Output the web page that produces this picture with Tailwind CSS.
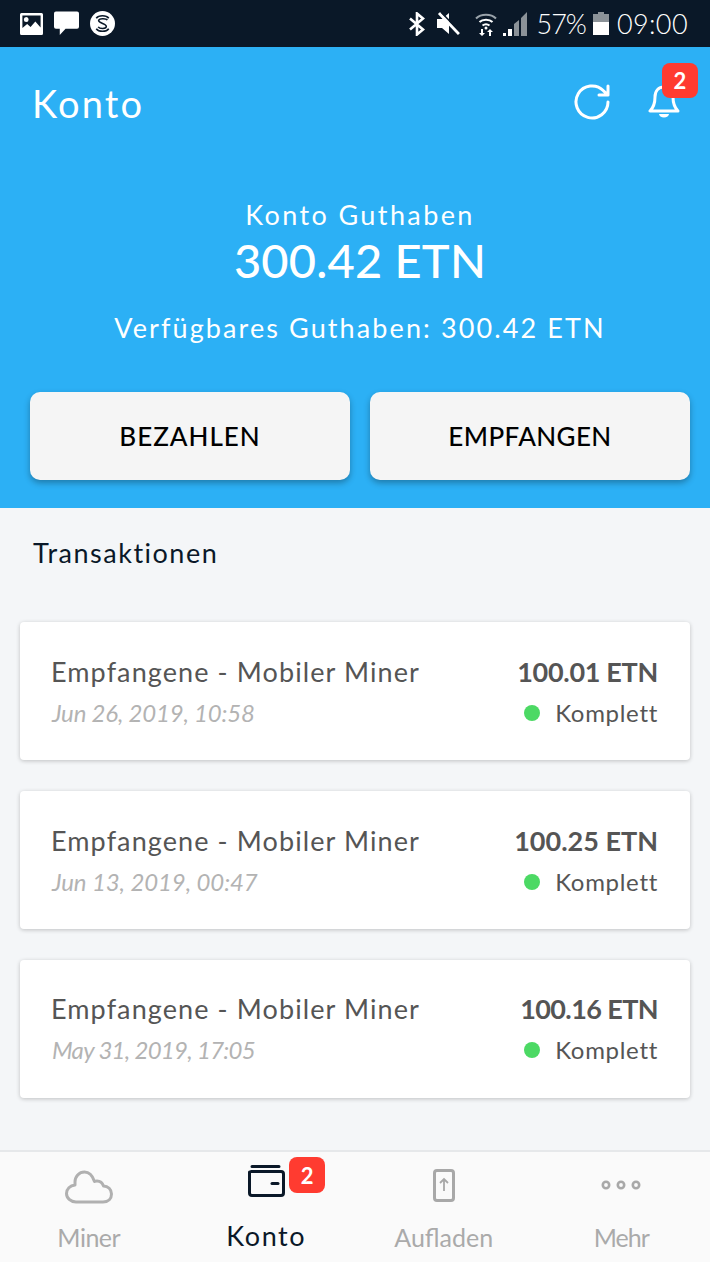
<!DOCTYPE html>
<html lang="de">
<head>
    <meta charset="UTF-8">
    <meta name="viewport" content="width=device-width, initial-scale=1.0">
    <title>Konto</title>
    <script src="https://cdn.jsdelivr.net/npm/@tailwindcss/browser@4"></script>
</head>
<body class="w-[710px] h-[1262px] overflow-hidden flex flex-col bg-[#f4f6f8] font-['Lato',sans-serif]">

    <!-- status bar -->
    <div class="h-[47px] shrink-0 bg-[#0a1828] flex items-center justify-between pl-[20px] pr-[22px] text-white">
        <div class="flex items-center gap-[11px]">
            <svg width="23" height="22" viewBox="0 0 24 22" preserveAspectRatio="none"><path fill="#fff" fill-rule="evenodd" d="M1.500 0h21A1.500 1.500 0 0 1 24 1.500v19a1.500 1.500 0 0 1-1.500 1.500h-21A1.500 1.500 0 0 1 0 20.500v-19A1.500 1.500 0 0 1 1.500 0zM2.500 2.500v12.500l5-4 3.500 3 5-5.500 5.500 6V2.500zM6.500 4a2.500 2.500 0 1 1 0 5 2.500 2.500 0 0 1 0-5z"/></svg>
            <svg width="25" height="25" viewBox="0 0 26 25"><path fill="#fff" d="M2 0h22a2 2 0 0 1 2 2v14a2 2 0 0 1-2 2H12l-6 6.500V18H2a2 2 0 0 1-2-2V2a2 2 0 0 1 2-2z"/></svg>
            <svg width="25" height="25" viewBox="0 0 26 26"><circle cx="13" cy="13" r="13" fill="#fff"/><path fill="none" stroke="#0a1828" stroke-width="1.600" d="M18 9.500c-1-1.700-8-2.300-9 .2-1 3 8 3 8 6.500 0 2.500-7 2.500-8.500.3M6.500 7.500C9 4 17 4 19.500 7.500M6.500 18.500C9 22 17 22 19.500 18.500"/></svg>
        </div>
        <div class="flex items-center">
            <svg width="16" height="24" viewBox="0 0 16 24"><path fill="none" stroke="#fff" stroke-width="2.600" d="M1 6.500l13 11-6 5V1.500l6 5-13 11"/></svg>
            <svg class="ml-[12px]" width="23" height="23" viewBox="0 0 23 23"><path fill="#fff" d="M0 7h5l7-6v21l-7-6H0z"/><path stroke="#fff" stroke-width="3" d="M2 1l20 21"/><path stroke="#0a1828" stroke-width="1.500" d="M4 0l20 21"/></svg>
            <svg class="ml-[15px]" width="22" height="24" viewBox="0 0 22 24"><path fill="none" stroke="#9aa3ab" stroke-width="2" d="M1 6.500c5-5 15-5 20 0"/><path fill="none" stroke="#fff" stroke-width="2" d="M4.500 10c3-3 10-3 13 0M7.500 13.500c2-1.500 5-1.500 7 0"/><circle cx="11" cy="16" r="1.500" fill="#fff"/><path fill="#fff" d="M6 17h2v4h2l-3 3-3-3h2zM15 17l3 3h-2v4h-2v-4h-2z"/></svg>
            <svg class="ml-[6px]" width="24" height="24" viewBox="0 0 24 24"><path fill="#fff" d="M0 24v-3h3v3zM5 24v-7h4v7z"/><path fill="#8b9298" d="M11 24V12l5-4v16zM18 24V6l6-6v24z"/></svg>
            <span class="ml-[10px] text-[27px] leading-none font-light tracking-[-1px]">57%</span>
            <svg class="ml-[7px]" width="16" height="23" viewBox="0 0 16 23"><path fill="#8b9298" d="M5 0h6v2h5v9H0V2h5z"/><path fill="#fff" d="M0 10h16v13H0z"/></svg>
            <span class="ml-[8px] text-[27px] leading-none font-light tracking-[0.4px]">09:00</span>
        </div>
    </div>

    <!-- blue header -->
    <div class="h-[461px] shrink-0 bg-[#2cb0f5] flex flex-col text-white">
        <div class="flex items-start justify-between pl-[32px] pr-[30px] pt-[32px] h-[104px]">
            <span class="text-[38px] leading-[48px] tracking-[2.2px]">Konto</span>
            <div class="flex items-center pt-[1px]">
                <svg class="mt-[4px]" width="36" height="36" viewBox="0 0 36 36"><path fill="none" stroke="#fff" stroke-width="3" stroke-linecap="round" stroke-linejoin="round" d="M34 18a16 16 0 1 1-4.500-11.200L34 11M34 2v9h-9"/></svg>
                <div class="relative ml-[38px] w-[32px] h-[36px] mt-[4px]">
                    <svg width="32" height="36" viewBox="0 0 32 36"><path fill="none" stroke="#fff" stroke-width="3" stroke-linejoin="round" d="M16 3c-5.500 0-9 4-9 10 0 8-2 11-5 14h28c-3-3-5-6-5-14 0-6-3.500-10-9-10z"/><path fill="#fff" d="M11 30h10a5 3.500 0 0 1-10 0z"/></svg>
                    <span class="absolute left-[14px] top-[-21px] w-[36px] h-[35px] rounded-[8px] bg-[#ff3b30] flex items-center justify-center text-[22px] font-bold">2</span>
                </div>
            </div>
        </div>
        <div class="flex flex-col items-center pl-[10px]">
            <div class="text-[27px] leading-[34px] mt-[47px] tracking-[2.4px]">Konto Guthaben</div>
            <div class="text-[47px] leading-[56px] font-medium tracking-[0.2px]">300.42 ETN</div>
            <div class="text-[27px] leading-[34px] mt-[23px] tracking-[2.1px]">Verfügbares Guthaben: 300.42 ETN</div>
        </div>
        <div class="flex gap-[20px] pl-[30px] pr-[20px] mt-[47px]">
            <button class="flex-1 h-[88px] rounded-[10px] bg-[#f5f5f5] text-black text-[26px] font-medium tracking-[1px] shadow-[0_3px_6px_rgba(0,0,0,0.3)]">BEZAHLEN</button>
            <button class="flex-1 h-[88px] rounded-[10px] bg-[#f5f5f5] text-black text-[26px] font-medium tracking-[0.4px] shadow-[0_3px_6px_rgba(0,0,0,0.3)]">EMPFANGEN</button>
        </div>
    </div>

    <!-- transactions -->
    <div class="flex-1 flex flex-col">
        <div class="pl-[33px] pt-[28px] h-[114px] text-[27px] leading-[34px] text-[#0a1828] tracking-[1.5px]">Transaktionen</div>
        <div class="flex flex-col gap-[31px] px-[20px]">
            <div class="h-[138px] bg-white rounded-[4px] shadow-[0_1px_4px_rgba(0,0,0,0.22)] flex justify-between pl-[31px] pr-[32px] pt-[33px]">
                <div>
                    <div class="text-[27px] leading-[34px] text-[#555555] tracking-[1.1px]">Empfangene - Mobiler Miner</div>
                    <div class="text-[24px] leading-[30px] mt-[9px] italic text-[#b3b3b3] tracking-[-0.2px] pl-[1px]">Jun 26, 2019, 10:58</div>
                </div>
                <div class="flex flex-col items-end">
                    <div class="text-[27px] leading-[34px] font-bold text-[#555555] tracking-[-0.3px]">100.01 ETN</div>
                    <div class="flex items-center gap-[15px] mt-[9px] text-[24px] leading-[30px] text-[#555555] tracking-[0.7px]"><span class="w-[16px] h-[16px] rounded-full bg-[#4cd964]"></span>Komplett</div>
                </div>
            </div>
            <div class="h-[138px] bg-white rounded-[4px] shadow-[0_1px_4px_rgba(0,0,0,0.22)] flex justify-between pl-[31px] pr-[32px] pt-[33px]">
                <div>
                    <div class="text-[27px] leading-[34px] text-[#555555] tracking-[1.1px]">Empfangene - Mobiler Miner</div>
                    <div class="text-[24px] leading-[30px] mt-[9px] italic text-[#b3b3b3] tracking-[-0.1px] pl-[1px]">Jun 13, 2019, 00:47</div>
                </div>
                <div class="flex flex-col items-end">
                    <div class="text-[27px] leading-[34px] font-bold text-[#555555]">100.25 ETN</div>
                    <div class="flex items-center gap-[15px] mt-[9px] text-[24px] leading-[30px] text-[#555555] tracking-[0.7px]"><span class="w-[16px] h-[16px] rounded-full bg-[#4cd964]"></span>Komplett</div>
                </div>
            </div>
            <div class="h-[138px] bg-white rounded-[4px] shadow-[0_1px_4px_rgba(0,0,0,0.22)] flex justify-between pl-[31px] pr-[32px] pt-[32px]">
                <div>
                    <div class="text-[27px] leading-[34px] text-[#555555] tracking-[1.1px]">Empfangene - Mobiler Miner</div>
                    <div class="text-[24px] leading-[30px] mt-[9px] italic text-[#b3b3b3] tracking-[-0.7px] pl-[1px]">May 31, 2019, 17:05</div>
                </div>
                <div class="flex flex-col items-end">
                    <div class="text-[27px] leading-[34px] font-bold text-[#555555] tracking-[-0.6px]">100.16 ETN</div>
                    <div class="flex items-center gap-[15px] mt-[9px] text-[24px] leading-[30px] text-[#555555] tracking-[0.7px]"><span class="w-[16px] h-[16px] rounded-full bg-[#4cd964]"></span>Komplett</div>
                </div>
            </div>
        </div>
    </div>

    <!-- tab bar -->
    <div class="h-[112px] shrink-0 border-t-2 border-[#e6e8ea] bg-[#fafafa] grid grid-cols-4 text-[25px] text-[#aaaaaa]">
        <div class="flex flex-col items-center pt-[18px]">
            <svg width="48" height="34" viewBox="0 0 48 34"><path fill="none" stroke="#b0b0b0" stroke-width="3" stroke-linejoin="round" d="M11 32h27c5.500 0 8.500-3.500 8.500-8 0-4.500-3.500-8-8-8-1-3-3.500-5-6.500-5-1 0-2 .2-2.500.5C27.500 5.500 24 2 19.500 2 14 2 10 6.500 10 12v3c-5 .5-8.500 4-8.500 8.500S5.500 32 11 32z"/></svg>
            <span class="mt-[17px] leading-[32px] tracking-[-0.5px]">Miner</span>
        </div>
        <div class="flex flex-col items-center pt-[13px] text-[#0a1828]">
            <div class="relative">
                <svg width="38" height="33" viewBox="0 0 38 33"><path fill="none" stroke="#0a1828" stroke-width="3" stroke-linecap="round" stroke-linejoin="round" d="M5 1.500h27M4 6.500h30a2.500 2.500 0 0 1 2.500 2.500v19a2.500 2.500 0 0 1-2.500 2.500H5A2.500 2.500 0 0 1 2.500 28V7"/><path stroke="#0a1828" stroke-width="3" stroke-linecap="round" d="M25 18.500h6"/></svg>
                <span class="absolute left-[42px] top-[-8px] w-[36px] h-[36px] rounded-[8px] bg-[#ff3b30] flex items-center justify-center text-[22px] font-bold text-white">2</span>
            </div>
            <span class="mt-[22px] leading-[32px] text-[27px] tracking-[1.6px]">Konto</span>
        </div>
        <div class="flex flex-col items-center pt-[17px]">
            <svg width="22" height="33" viewBox="0 0 22 33"><rect x="1.500" y="1.500" width="19" height="30" rx="2.500" fill="none" stroke="#a8a8a8" stroke-width="3"/><path fill="none" stroke="#a8a8a8" stroke-width="1.800" d="M11 22V10M7 14l4-4 4 4"/></svg>
            <span class="mt-[19px] leading-[32px]">Aufladen</span>
        </div>
        <div class="flex flex-col items-center pt-[28px]">
            <svg width="40" height="10" viewBox="0 0 40 10"><circle cx="5" cy="5" r="3.200" fill="none" stroke="#a8a8a8" stroke-width="2.600"/><circle cx="20" cy="5" r="3.200" fill="none" stroke="#a8a8a8" stroke-width="2.600"/><circle cx="35" cy="5" r="3.200" fill="none" stroke="#a8a8a8" stroke-width="2.600"/></svg>
            <span class="mt-[31px] leading-[32px] tracking-[-1px]">Mehr</span>
        </div>
    </div>

</body>
</html>
